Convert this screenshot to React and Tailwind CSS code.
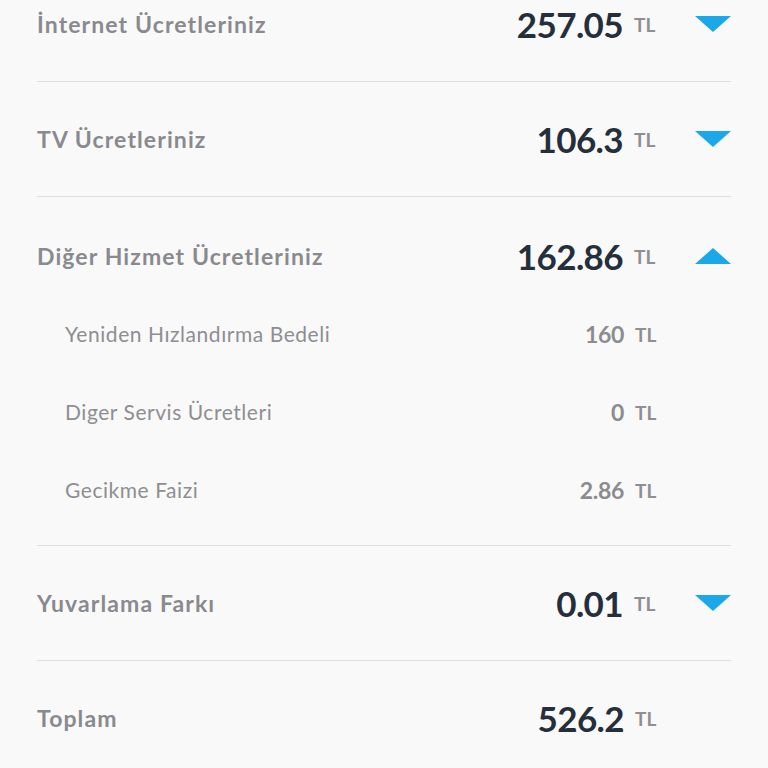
import React from "react";

const rows = [
  { label: "İnternet Ücretleriniz", amount: "257.05" },
  { label: "TV Ücretleriniz", amount: "106.3" },
  {
    label: "Diğer Hizmet Ücretleriniz",
    amount: "162.86",
    open: true,
    items: [
      { label: "Yeniden Hızlandırma Bedeli", amount: "160" },
      { label: "Diger Servis Ücretleri", amount: "0" },
      { label: "Gecikme Faizi", amount: "2.86" },
    ],
  },
  { label: "Yuvarlama Farkı", amount: "0.01" },
];

const Arrow = ({ up }) => (
  <svg width="36" height="16" viewBox="0 0 36 16" className="shrink-0">
    {up ? (
      <polygon points="0,16 36,16 18,0" fill="#1ba8e8" />
    ) : (
      <polygon points="0,0 36,0 18,16" fill="#1ba8e8" />
    )}
  </svg>
);

const Amount = ({ value, small }) => (
  <div className="flex items-center">
    <span
      className={
        small
          ? "text-[23px] font-bold text-[#8c8c8f] tracking-[-0.3px]"
          : "text-[35px] font-bold text-[#252f3b] tracking-[-0.6px]"
      }
    >
      {value}
    </span>
    <span className="ml-[11px] mt-[2px] text-[19px] font-bold text-[#8f8f93] w-[22px]">
      TL
    </span>
  </div>
);

const App = () => {
  return (
    <div
      className="w-[768px] h-[768px] overflow-hidden bg-[#f9f9fa] px-[37px]"
      style={{ fontFamily: "Lato, 'Noto Sans', sans-serif" }}
    >
      <div className="-mt-[33px]">
        {rows.map((row, i) => (
          <div key={i} className="border-b border-[#dedede]">
            <div
              className={`flex items-center justify-between ${
                row.open ? "h-[118px]" : "h-[114px]"
              }`}
            >
              <span className="text-[23px] font-bold text-[#8a8a8e] tracking-[1.1px]">
                {row.label}
              </span>
              <div className="flex items-center gap-[39px]">
                <Amount value={row.amount} />
                <Arrow up={row.open} />
              </div>
            </div>
            {row.items && (
              <div className="flex flex-col gap-[40px] pl-[28px] pr-[74px] pb-[36px]">
                {row.items.map((item, j) => (
                  <div key={j} className="flex items-center justify-between h-[38px]">
                    <span className="text-[21px] text-[#8e8e91] tracking-[0.55px]">
                      {item.label}
                    </span>
                    <Amount value={item.amount} small />
                  </div>
                ))}
              </div>
            )}
          </div>
        ))}
        <div className="flex items-center justify-between h-[114px] pr-[74px]">
          <span className="text-[23px] font-bold text-[#8a8a8e] tracking-[1.1px]">
            Toplam
          </span>
          <Amount value="526.2" />
        </div>
      </div>
    </div>
  );
};

export default App;
